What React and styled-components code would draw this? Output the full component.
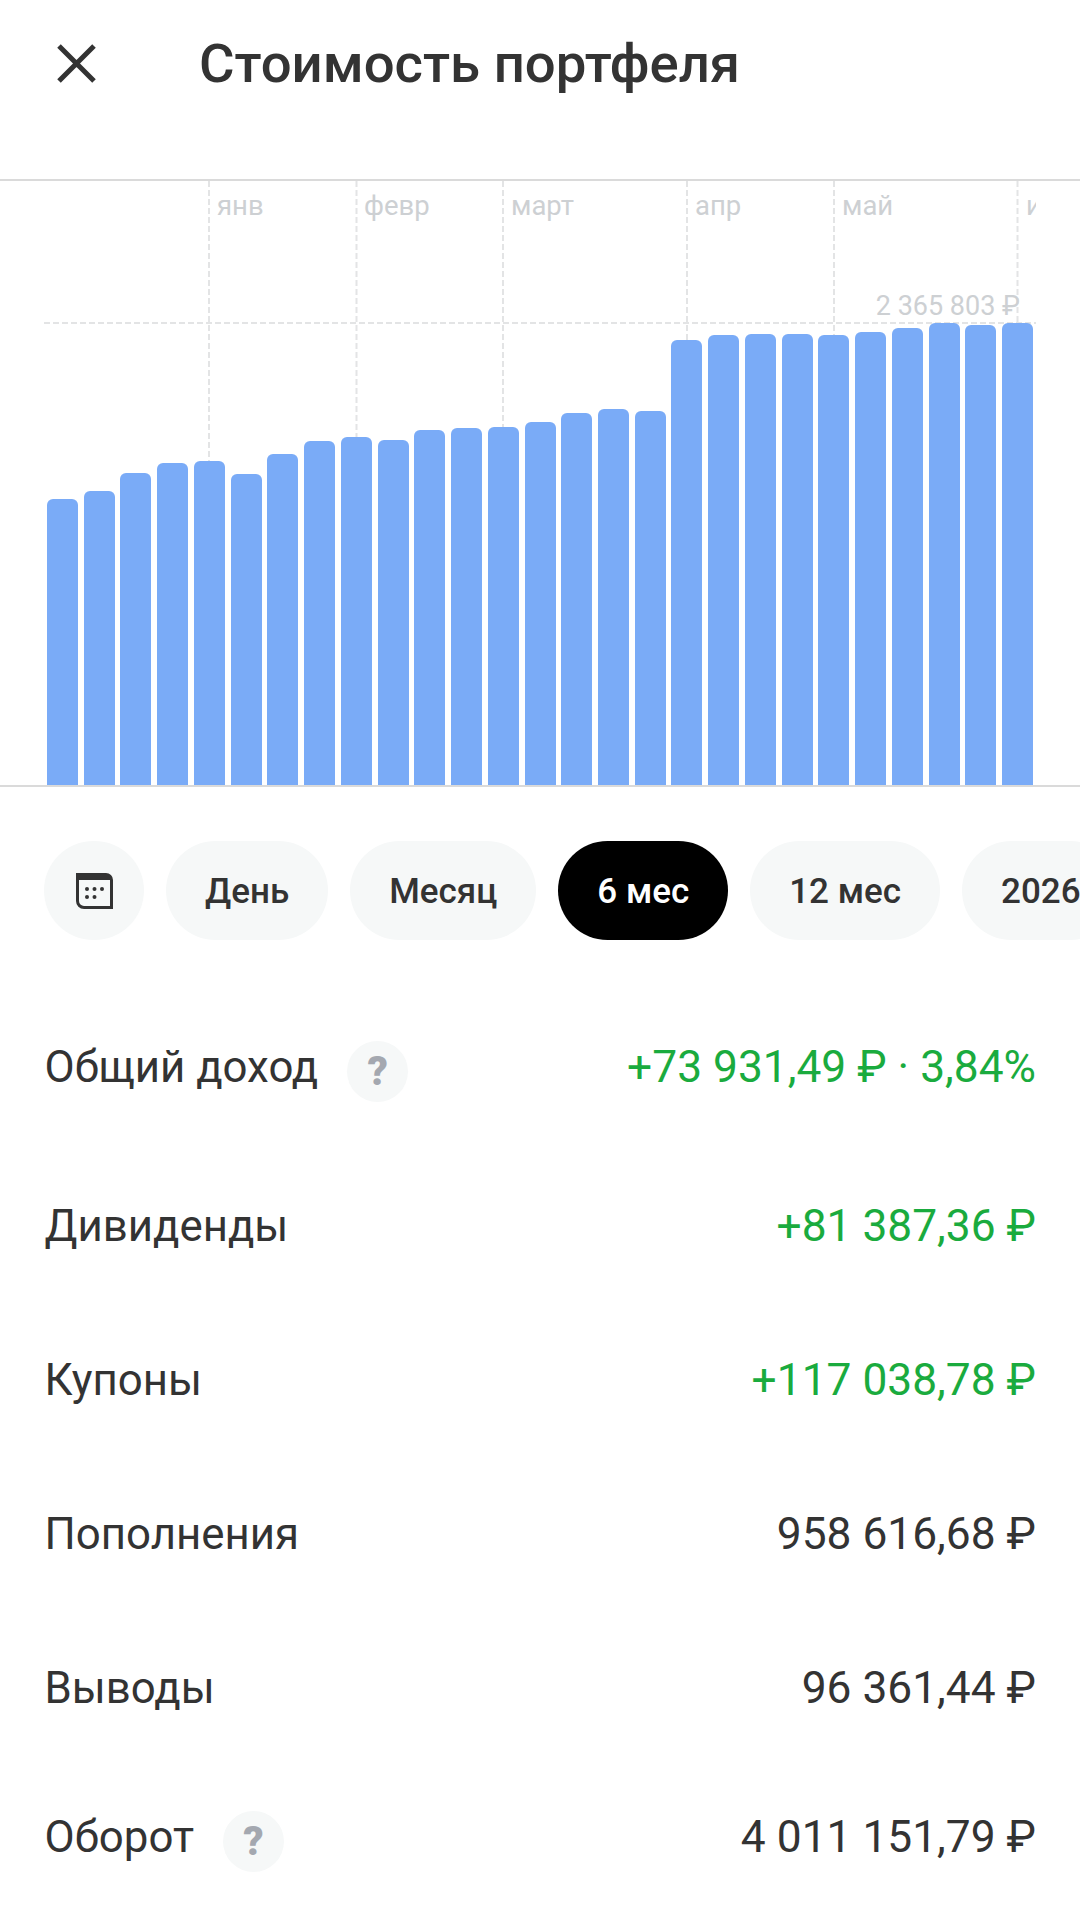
import React from 'react';
import styled, { createGlobalStyle } from 'styled-components';

const GlobalStyle = createGlobalStyle`
    html, body {
        margin: 0;
        padding: 0;
        background: #fff;
    }
    body {
        font-family: Roboto, "Liberation Sans", sans-serif;
        color: #333;
    }
`;

const Page = styled.div`
    width: 1080px;
    height: 1931px;
    overflow: hidden;
    background: #fff;
`;

const Header = styled.header`
    height: 179px;
    display: flex;
    align-items: flex-start;
    padding: 32px 0 0 57px;
    box-sizing: border-box;
`;

const CloseButton = styled.button`
    width: 39px;
    height: 39px;
    margin-top: 12px;
    padding: 0;
    border: 0;
    background: none;
    color: #333;
    svg { display: block; }
`;

const Title = styled.h1`
    margin: 0 0 0 103px;
    font-size: 54.5px;
    line-height: 62px;
    font-weight: 500;
    color: #333;
`;

const Chart = styled.section`
    position: relative;
    height: 608px;
    box-sizing: border-box;
    border-top: 2px solid #dadada;
    border-bottom: 2px solid #dadada;
    display: flex;
    align-items: flex-end;
    gap: 5.75px;
    padding: 0 47px;
`;

const GridSvg = styled.svg`
    position: absolute;
    left: 0;
    top: 0;
    width: 1080px;
    height: 604px;
`;

const Bar = styled.div`
    position: relative;
    flex: 1 1 0;
    background: #7aabf7;
    border-radius: 6px 6px 0 0;
`;

const MonthLabel = styled.span`
    position: absolute;
    top: 6.5px;
    left: ${p => p.$left}px;
    max-width: ${p => p.$maxWidth || 200}px;
    overflow: hidden;
    font-size: 27.5px;
    line-height: 36px;
    color: #cdd0d3;
    white-space: nowrap;
`;

const MaxLabel = styled.span`
    position: absolute;
    top: 108px;
    right: 60px;
    font-size: 27px;
    line-height: 34px;
    color: #cdd0d3;
    white-space: nowrap;
`;

const Periods = styled.nav`
    display: flex;
    gap: 22px;
    padding: 54px 0 0 44px;
    overflow: hidden;
`;

const Chip = styled.button`
    flex: none;
    height: 99px;
    min-width: ${p => (p.$round ? 100 : 0)}px;
    padding: ${p => (p.$round ? 0 : '2px 39px 0')};
    display: flex;
    align-items: center;
    justify-content: center;
    border: 0;
    border-radius: 50px;
    font-family: inherit;
    font-size: 35px;
    font-weight: 500;
    background: ${p => (p.$active ? '#000' : '#f6f8f8')};
    color: ${p => (p.$active ? '#fff' : '#333')};
`;

const Rows = styled.div`
    margin-top: 102px;
    padding: 0 44px 0 44.5px;
`;

const Row = styled.div`
    height: ${p => p.$height || 154}px;
    display: flex;
    align-items: flex-start;
    justify-content: space-between;
    font-size: 43.8px;
    line-height: 50px;
`;

const Label = styled.div`
    display: flex;
    align-items: flex-start;
    gap: 29px;
    color: #333;
`;

const Value = styled.div`
    font-size: 44.3px;
    color: ${p => (p.$green ? '#1aab3e' : '#333')};
`;

const Hint = styled.span`
    width: 61px;
    height: 61px;
    margin-top: -1px;
    border-radius: 50%;
    background: #f6f8f8;
    color: #a4a8b0;
    display: flex;
    align-items: center;
    justify-content: center;
    font-size: 40px;
    font-weight: 900;
`;

const barTops = [
    499, 491, 473, 463, 461, 474, 454, 441, 437, 440, 430, 428, 427, 422,
    413, 409, 411, 340, 335, 334, 334, 335, 332, 328, 323, 325, 323,
];
const gridX = [209, 356.5, 503, 687, 834, 1017.5];
const months = [
    { text: 'янв', left: 217 },
    { text: 'февр', left: 364 },
    { text: 'март', left: 511 },
    { text: 'апр', left: 695 },
    { text: 'май', left: 842 },
    { text: 'июнь', left: 1026, maxWidth: 10 },
];
const periods = ['День', 'Месяц', '6 мес', '12 мес', '2026'];
const rows = [
    { label: 'Общий доход', value: '+73 931,49 ₽ · 3,84%', green: true, hint: true, height: 159 },
    { label: 'Дивиденды', value: '+81 387,36 ₽', green: true },
    { label: 'Купоны', value: '+117 038,78 ₽', green: true },
    { label: 'Пополнения', value: '958 616,68 ₽' },
    { label: 'Выводы', value: '96 361,44 ₽', height: 149 },
    { label: 'Оборот', value: '4 011 151,79 ₽', hint: true },
];

const BASELINE = 785;
const CHART_TOP = 181;

const CloseIcon = () => (
    <svg width="39" height="39" viewBox="0 0 39 39" fill="none" stroke="currentColor" strokeWidth="5">
        <path d="M2 2 37 37M37 2 2 37" />
    </svg>
);

const CalendarIcon = () => (
    <svg width="37" height="36" viewBox="0 0 37 36">
        <path
            d="M0 0h30a7 7 0 0 1 7 7v29H8a8 8 0 0 1-8-8z M3 7v21a5 5 0 0 0 5 5h26V7z"
            fill="#333"
            fillRule="evenodd"
        />
        <g fill="#333">
            <circle cx="11" cy="16" r="2" />
            <circle cx="18.5" cy="16" r="2" />
            <circle cx="26" cy="16" r="2" />
            <circle cx="11" cy="24" r="2" />
            <circle cx="18.5" cy="24" r="2" />
        </g>
    </svg>
);

const App = () => (
    <Page>
        <GlobalStyle />
        <Header>
            <CloseButton aria-label="Закрыть">
                <CloseIcon />
            </CloseButton>
            <Title>Стоимость портфеля</Title>
        </Header>
        <Chart>
            <GridSvg viewBox="0 0 1080 604" fill="none" stroke="#e3e4e5" strokeWidth="2" strokeDasharray="6 3">
                <line x1="44" y1={323 - CHART_TOP} x2="1036" y2={323 - CHART_TOP} />
                {gridX.map(x => (
                    <line key={x} x1={x} y1="0" x2={x} y2="604" />
                ))}
            </GridSvg>
            {months.map(m => (
                <MonthLabel key={m.text} $left={m.left} $maxWidth={m.maxWidth}>
                    {m.text}
                </MonthLabel>
            ))}
            <MaxLabel>2 365 803 ₽</MaxLabel>
            {barTops.map((top, i) => (
                <Bar key={i} style={{ height: BASELINE - top }} />
            ))}
        </Chart>
        <Periods>
            <Chip $round aria-label="Календарь">
                <CalendarIcon />
            </Chip>
            {periods.map(p => (
                <Chip key={p} $active={p === '6 мес'}>
                    {p}
                </Chip>
            ))}
        </Periods>
        <Rows>
            {rows.map(r => (
                <Row key={r.label} $height={r.height}>
                    <Label>
                        {r.label}
                        {r.hint && <Hint>?</Hint>}
                    </Label>
                    <Value $green={r.green}>{r.value}</Value>
                </Row>
            ))}
        </Rows>
    </Page>
);

export default App;
